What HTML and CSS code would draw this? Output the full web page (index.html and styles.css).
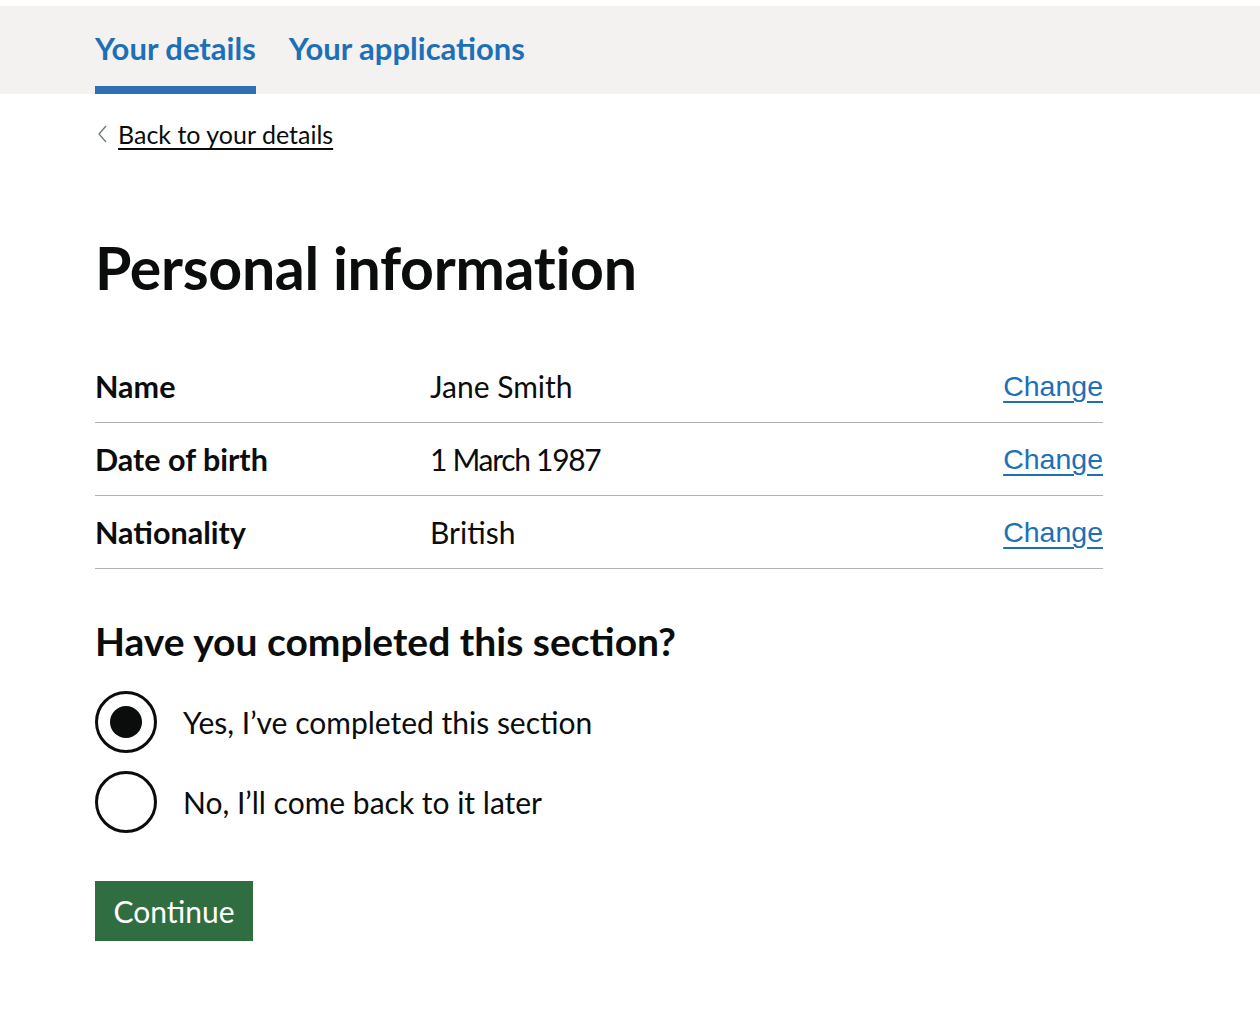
FILE: index.html
```html
<!DOCTYPE html>
<html lang="en">
<head>
<meta charset="utf-8">
<title>Personal information</title>
<link rel="stylesheet" href="styles.css">
</head>
<body>
<header class="top">
  <nav class="nav">
    <a class="nav-item nav-item--active" href="#">Your details</a>
    <a class="nav-item" href="#">Your applications</a>
  </nav>
</header>
<main class="main">
  <a class="back" href="#">
    <svg class="back-icon" width="11" height="18" viewBox="0 0 11 18" aria-hidden="true"><path d="M9 1 L2 9 L9 17" fill="none" stroke="#6f777b" stroke-width="1.3"/></svg>
    <span class="back-text">Back to your details</span>
  </a>
  <h1 class="title">Personal information</h1>
  <dl class="summary">
    <div class="summary-row">
      <dt class="summary-key">Name</dt>
      <dd class="summary-value">Jane Smith</dd>
      <dd class="summary-action"><a class="change" href="#">Change</a></dd>
    </div>
    <div class="summary-row">
      <dt class="summary-key">Date of birth</dt>
      <dd class="summary-value summary-value--digits">1 March 1987</dd>
      <dd class="summary-action"><a class="change" href="#">Change</a></dd>
    </div>
    <div class="summary-row">
      <dt class="summary-key">Nationality</dt>
      <dd class="summary-value">British</dd>
      <dd class="summary-action"><a class="change" href="#">Change</a></dd>
    </div>
  </dl>
  <fieldset class="fieldset">
    <legend class="legend">Have you completed this section?</legend>
    <div class="radios">
      <label class="radio">
        <span class="radio-circle radio-circle--checked"></span>
        <span class="radio-label">Yes, I’ve completed this section</span>
      </label>
      <label class="radio">
        <span class="radio-circle"></span>
        <span class="radio-label">No, I’ll come back to it later</span>
      </label>
    </div>
  </fieldset>
  <button class="button" type="button">Continue</button>
</main>
</body>
</html>
```
FILE: styles.css
```css
html, body {
  margin: 0;
  padding: 0;
  background: #ffffff;
}
body {
  font-family: Lato, "Liberation Sans", Arial, sans-serif;
  color: #0b0c0c;
}
.top {
  margin-top: 6px;
  background: #f3f2f1;
  height: 88px;
}
.nav {
  display: flex;
  gap: 33px;
  padding-left: 95px;
  height: 88px;
  box-sizing: border-box;
}
.nav-item {
  display: block;
  font-weight: 700;
  font-size: 31px;
  line-height: 32px;
  padding-top: 26px;
  color: #1d70b8;
  text-decoration: none;
  box-sizing: border-box;
  height: 88px;
  border-bottom: 8px solid transparent;
}
.nav-item--active {
  border-bottom-color: #2f6fb3;
}
.main {
  padding-left: 95px;
  width: 1008px;
}
.back {
  display: inline-flex;
  align-items: center;
  gap: 10px;
  margin-top: 24px;
  color: #0b0c0c;
  text-decoration: none;
  font-size: 25px;
  line-height: 32px;
}
.back-icon {
  margin-left: 2px;
}
.back-text {
  text-decoration: underline;
  text-underline-offset: 4px;
  text-decoration-thickness: 2px;
}
.title {
  margin: 86px 0 0;
  font-size: 59px;
  line-height: 64px;
  font-weight: 700;
  letter-spacing: -0.3px;
}
.summary {
  margin: 50px 0 0;
  padding: 0;
}
.summary-row {
  display: flex;
  align-items: center;
  border-bottom: 1px solid #b1b4b6;
  padding: 18px 0;
  height: 73px;
  box-sizing: border-box;
}
.summary-key {
  width: 335px;
  font-weight: 700;
  font-size: 30.5px;
  line-height: 36px;
  margin: 0;
}
.summary-value {
  flex: 1;
  font-size: 30px;
  line-height: 36px;
  margin: 0;
}
.summary-value--digits {
  letter-spacing: -1.3px;
}
.summary-action {
  margin: 0;
  text-align: right;
}
.change {
  font-family: "Liberation Sans", Arial, sans-serif;
  font-size: 28.5px;
  line-height: 36px;
  color: #1d70b8;
  text-decoration: underline;
  text-underline-offset: 5px;
  text-decoration-thickness: 2px;
}
.fieldset {
  border: 0;
  margin: 50px 0 0;
  padding: 0;
}
.legend {
  padding: 0;
  font-weight: 700;
  font-size: 39px;
  line-height: 44px;
}
.radios {
  display: flex;
  flex-direction: column;
  gap: 18px;
  margin-top: 28px;
}
.radio {
  display: flex;
  align-items: center;
  gap: 26px;
}
.radio-circle {
  width: 62px;
  height: 62px;
  box-sizing: border-box;
  border: 3px solid #0b0c0c;
  border-radius: 50%;
  display: flex;
  align-items: center;
  justify-content: center;
  flex: none;
}
.radio-circle--checked::after {
  content: "";
  width: 32px;
  height: 32px;
  border-radius: 50%;
  background: #0b0c0c;
}
.radio-label {
  font-size: 30px;
  line-height: 36px;
}
.button {
  display: block;
  margin-top: 48px;
  font-family: Lato, "Liberation Sans", Arial, sans-serif;
  font-size: 30px;
  line-height: 36px;
  color: #ffffff;
  background: #306e42;
  border: 0;
  border-radius: 0;
  padding: 12px 18.5px;
  box-shadow: 0 3px 0 #0f2a18;
  cursor: pointer;
}
```
